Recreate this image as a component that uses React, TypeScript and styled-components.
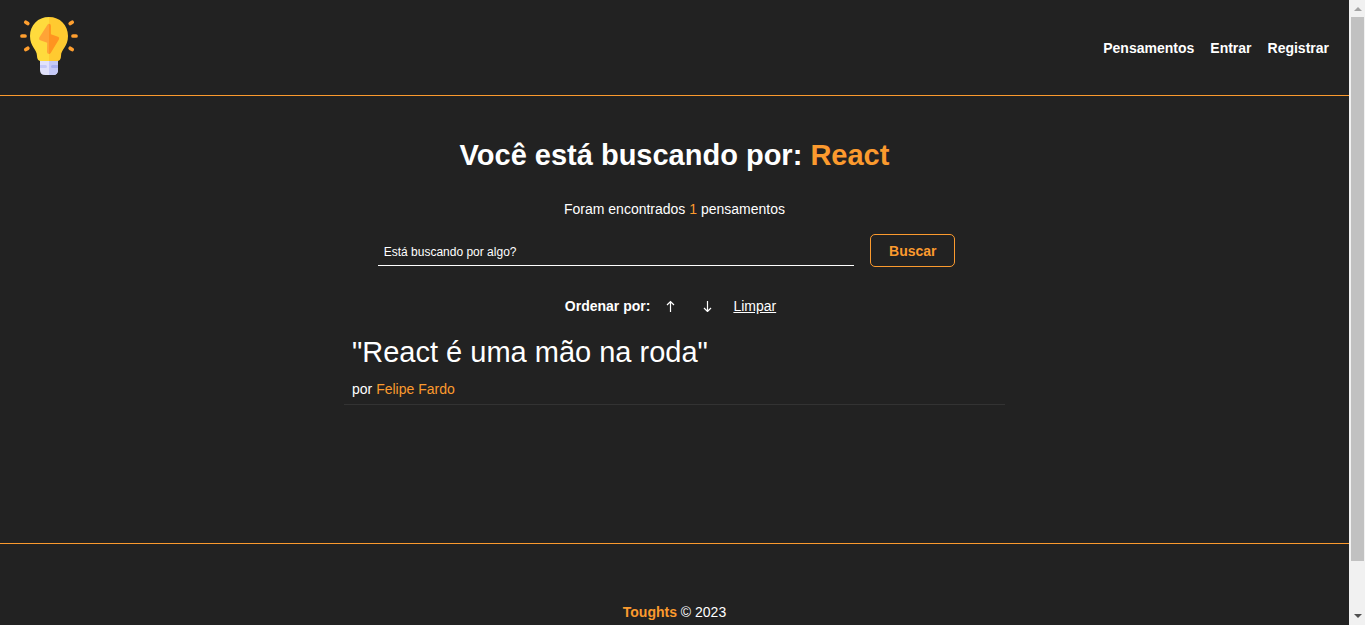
import React from "react";
import styled, { createGlobalStyle } from "styled-components";

const accent = "#fb9a2e";

const GlobalStyle = createGlobalStyle`
  * { box-sizing: border-box; margin: 0; padding: 0; }
  body {
    background: #222;
    color: #fff;
    font-family: "Liberation Sans", Arial, sans-serif;
    font-size: 14px;
    line-height: 22px;
  }
  a { color: inherit; text-decoration: none; }
`;

const Shell = styled.div`
  display: flex;
  height: 100vh;
  overflow: hidden;
`;

const Page = styled.div`
  flex: 1;
  min-width: 0;
  overflow: hidden;
`;

const Header = styled.header`
  display: flex;
  align-items: center;
  justify-content: space-between;
  padding: 16px 20px 20px;
  border-bottom: 1px solid ${accent};
`;

const Logo = styled.a`
  display: block;
  svg { display: block; width: 58px; height: 59px; }
`;

const Nav = styled.nav`
  display: flex;
  gap: 16px;
  padding-top: 4px;
  font-weight: bold;
`;

const Main = styled.main`
  display: flex;
  flex-direction: column;
  align-items: center;
  min-height: 447px;
  padding-top: 40px;
`;

const Title = styled.h1`
  font-size: 29px;
  line-height: 38px;
`;

const Accent = styled.span<{ $bold?: boolean }>`
  color: ${accent};
  font-weight: ${(p) => (p.$bold ? "bold" : "inherit")};
`;

const Summary = styled.p`
  margin: 24px 0 14px;
`;

const SearchForm = styled.form`
  display: flex;
  gap: 16px;
  width: 44%;
  padding-right: 16px;
`;

const SearchInput = styled.input`
  flex: 1;
  min-width: 0;
  height: 32px;
  padding: 4px 6px 0;
  border: 0;
  border-bottom: 1px solid #fff;
  background: transparent;
  color: #fff;
  font: 12px "Liberation Sans", Arial, sans-serif;
  outline: 0;
  &::placeholder { color: #fff; opacity: 1; }
`;

const SearchButton = styled.button`
  width: 85px;
  height: 33px;
  border: 1px solid ${accent};
  border-radius: 5px;
  background: transparent;
  color: ${accent};
  font: bold 14px "Liberation Sans", Arial, sans-serif;
`;

const OrderBar = styled.div`
  display: flex;
  align-items: center;
  margin: 28px 0 16px;
  padding-right: 8px;
`;

const OrderLabel = styled.span`
  margin-right: 2px;
  font-weight: bold;
`;

const OrderButton = styled.button`
  width: 37px;
  height: 22px;
  border: 0;
  background: transparent;
  color: #fff;
  svg { display: block; margin: 0 auto; }
`;

const ClearLink = styled.a`
  margin-left: 7px;
  && { text-decoration: underline; }
`;

const Thought = styled.article`
  width: 49%;
  padding: 0 8px 4px;
  border-bottom: 1px solid #333;
`;

const Quote = styled.p`
  margin-bottom: 7px;
  font-size: 29px;
  line-height: 38px;
`;

const Footer = styled.footer`
  padding: 57px 20px;
  border-top: 1px solid ${accent};
  text-align: center;
`;

const ScrollTrack = styled.div`
  display: flex;
  flex-direction: column;
  width: 16px;
  background: #f1f1f1;
`;

const ScrollArrow = styled.div`
  height: 17px;
  svg { display: block; }
`;

const ScrollSpace = styled.div`
  flex: 8;
`;

const ScrollThumb = styled.div`
  flex: 92;
  margin: 0 1px 0 2px;
  background: #c1c1c1;
`;

function Bulb() {
  return (
    <svg viewBox="0 0 58 59" aria-hidden="true">
      <path d="M20 43h18v11q0 5-5 5h-8q-5 0-5-5z" fill="#e1e1fa" />
      <path d="M29 43h9v11q0 5-5 5h-4z" fill="#c5c9f7" />
      <path d="M20 49h5.500q1.500 0 1.500 1.500t-1.500 1.500h-5.500z" fill="#c5c9f7" />
      <path d="M38 49h-5.500q-1.500 0-1.500 1.500t1.500 1.500h5.500z" fill="#a8aff0" />
      <path d="M29 1C18 1 10 9 10 20c0 11 7 13 7 20q0 5 4 5h8z" fill="#ffdb3d" />
      <path d="M29 1c11 0 19 8 19 19 0 11-7 13-7 20q0 5-4 5h-8z" fill="#ffca30" />
      <path d="M29 7.800q-1 0-1.700 1.200L19.300 21.500q-1 2 .9 2.700l7 2.600-.2 9.400q.3 1.800 2 1.800z" fill="#ffa436" />
      <path d="M29 7.800q1.900 0 1.900 1.900v8.500l7.100 2.600q1.900.8.900 2.600l-8.200 13.600q-.7 1-1.700 1z" fill="#ff9420" />
      <g stroke="#ff9f2f" strokeWidth="3.700" strokeLinecap="round">
        <path d="M2 20h3M53 20h3M5.800 6.200l2 1.300M52.200 6.200l-2 1.300M5.800 33.500l2-1.200M52.200 33.500l-2-1.200" />
      </g>
    </svg>
  );
}

function Arrow({ down }: { down?: boolean }) {
  return (
    <svg width="9" height="12" viewBox="0 0 9 12" fill="none" stroke="#fff" strokeWidth="1.200" aria-hidden="true">
      <path d={down ? "M4.500 1v10.500M1 8L4.500 11.500 8 8" : "M4.500 12V1.500M1 5L4.500 1.500 8 5"} />
    </svg>
  );
}

export default function App() {
  return (
    <>
      <GlobalStyle />
      <Shell>
        <Page>
          <Header>
            <Logo href="#" aria-label="Toughts"><Bulb /></Logo>
            <Nav>
              <a href="#">Pensamentos</a>
              <a href="#">Entrar</a>
              <a href="#">Registrar</a>
            </Nav>
          </Header>
          <Main>
            <Title>Você está buscando por: <Accent>React</Accent></Title>
            <Summary>Foram encontrados <Accent>1</Accent> pensamentos</Summary>
            <SearchForm onSubmit={(e) => e.preventDefault()}>
              <SearchInput type="text" aria-label="Buscar pensamentos" placeholder="Está buscando por algo?" />
              <SearchButton type="submit">Buscar</SearchButton>
            </SearchForm>
            <OrderBar>
              <OrderLabel>Ordenar por:</OrderLabel>
              <OrderButton type="button" aria-label="Crescente"><Arrow /></OrderButton>
              <OrderButton type="button" aria-label="Decrescente"><Arrow down /></OrderButton>
              <ClearLink href="#">Limpar</ClearLink>
            </OrderBar>
            <Thought>
              <Quote>"React é uma mão na roda"</Quote>
              <p>por <Accent>Felipe Fardo</Accent></p>
            </Thought>
          </Main>
          <Footer><p><Accent $bold>Toughts</Accent> © 2023</p></Footer>
        </Page>
        <ScrollTrack aria-hidden="true">
          <ScrollArrow><svg width="16" height="17"><path d="M5 11l4-4 4 4z" fill="#a3a3a3" /></svg></ScrollArrow>
          <ScrollThumb />
          <ScrollSpace />
          <ScrollArrow><svg width="16" height="17"><path d="M5 6l4 4 4-4z" fill="#505050" /></svg></ScrollArrow>
        </ScrollTrack>
      </Shell>
    </>
  );
}
